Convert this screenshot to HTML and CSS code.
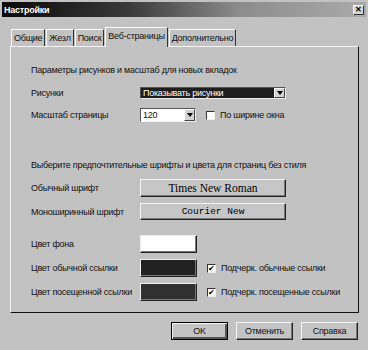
FILE: index.html
```html
<!DOCTYPE html>
<html lang="ru">
<head>
    <meta charset="UTF-8">
    <title>Настройки</title>
    <link rel="stylesheet" href="styles.css">
</head>
<body>
    <div class="window">
        <div class="titlebar">
            <span class="title">Настройки</span>
            <button class="close-btn">&#x2715;</button>
        </div>

        <div class="tabs">
            <div class="tab">Общие</div>
            <div class="tab">Жезл</div>
            <div class="tab">Поиск</div>
            <div class="tab active">Веб-страницы</div>
            <div class="tab">Дополнительно</div>
        </div>

        <div class="panel">
            <div class="section-title first">Параметры рисунков и масштаб для новых вкладок</div>

            <div class="row row-images">
                <span class="label">Рисунки</span>
                <div class="select select-dark">
                    <span class="select-text">Показывать рисунки</span>
                    <span class="arrow-btn"><span class="arrow"></span></span>
                </div>
            </div>

            <div class="row row-zoom">
                <span class="label">Масштаб страницы</span>
                <div class="select select-small">
                    <span class="select-text">120</span>
                    <span class="arrow-btn"><span class="arrow"></span></span>
                </div>
                <label class="check"><span class="box"></span>По ширине окна</label>
            </div>

            <div class="section-title second">Выберите предпочтительные шрифты и цвета для страниц без стиля</div>

            <div class="row row-font1">
                <span class="label">Обычный шрифт</span>
                <button class="font-btn serif">Times New Roman</button>
            </div>
            <div class="row row-font2">
                <span class="label">Моноширинный шрифт</span>
                <button class="font-btn mono">Courier New</button>
            </div>

            <div class="row row-color1">
                <span class="label">Цвет фона</span>
                <button class="color-btn white"></button>
            </div>
            <div class="row row-color">
                <span class="label">Цвет обычной ссылки</span>
                <button class="color-btn dark"></button>
                <label class="check"><span class="box checked">&#x2714;</span>Подчерк. обычные ссылки</label>
            </div>
            <div class="row row-color">
                <span class="label">Цвет посещенной ссылки</span>
                <button class="color-btn dark2"></button>
                <label class="check"><span class="box checked">&#x2714;</span>Подчерк. посещенные ссылки</label>
            </div>
        </div>

        <div class="buttons">
            <button class="dlg-btn default">OK</button>
            <button class="dlg-btn">Отменить</button>
            <button class="dlg-btn">Справка</button>
        </div>
    </div>
</body>
</html>
```

FILE: styles.css
```css
body {
    margin: 0;
    background: #c2c2c2;
    font-family: "Liberation Sans", Arial, sans-serif;
    font-size: 9px;
    letter-spacing: -0.25px;
    color: #111;
}

.window {
    width: 368px;
    height: 350px;
    box-sizing: border-box;
    padding-top: 2px;
    background: #c2c2c2;
    overflow: hidden;
}

/* Заголовок окна */
.titlebar {
    height: 15px;
    margin: 0 2px;
    display: flex;
    align-items: center;
    justify-content: space-between;
    background: linear-gradient(to right, #080808 0%, #3a3a3a 35%, #8c8c8c 65%, #aaaaaa 100%);
}
.title {
    color: #fff;
    font-weight: bold;
    font-size: 9px;
    padding-left: 2px;
}
.close-btn {
    width: 11px;
    height: 10px;
    margin-right: 2px;
    padding: 0;
    font-size: 8px;
    font-weight: bold;
    line-height: 8px;
    background: #d4d4d4;
    color: #000;
    border: 1px solid;
    border-color: #fff #333 #333 #fff;
}

/* Вкладки */
.tabs {
    display: flex;
    align-items: flex-end;
    gap: 1px;
    height: 29px;
    padding-left: 11px;
}
.tab {
    height: 16px;
    line-height: 16px;
    padding: 0 2px;
    border: 1px solid;
    border-color: #fafafa #333 transparent #fafafa;
    border-bottom: none;
    white-space: nowrap;
}
.tab.active {
    height: 19px;
    line-height: 17px;
    padding: 0 2px;
    background: #c2c2c2;
    position: relative;
    top: 1px;
    z-index: 1;
}

/* Панель */
.panel {
    margin-left: 10px;
    width: 349px;
    height: 267px;
    box-sizing: border-box;
    border: 1px solid;
    border-color: #f4f4f4 #111 #111 #f4f4f4;
    padding: 0 20px;
}
.section-title {
    line-height: 12px;
    white-space: nowrap;
}
.section-title.first { margin-top: 17px; }
.section-title.second { margin-top: 37px; }

.row {
    display: flex;
    align-items: center;
}
.label {
    width: 109px;
    flex-shrink: 0;
    white-space: nowrap;
}
.row-images { margin-top: 11px; height: 12px; }
.row-zoom { margin-top: 9px; height: 14px; }
.row-font1 { margin-top: 8px; height: 18px; }
.row-font2 { margin-top: 6px; height: 17px; }
.row-color1 { margin-top: 15px; height: 18px; }
.row-color { margin-top: 6px; height: 18px; }

.select {
    display: flex;
    flex-shrink: 0;
    height: 100%;
    box-sizing: border-box;
    border: 1px solid;
    border-color: #555 #eee #eee #555;
    background: #fff;
}
.select-dark {
    width: 146px;
    background: #1e1e1e;
    color: #fff;
}
.select-small {
    width: 56px;
}
.select-text {
    flex: 1;
    padding-left: 2px;
    line-height: 10px;
}
.select-small .select-text { line-height: 12px; }
.arrow-btn {
    width: 9px;
    background: #d4d4d4;
    border: 1px solid;
    border-color: #fff #444 #444 #fff;
    display: flex;
    align-items: center;
    justify-content: center;
}
.arrow {
    width: 0;
    height: 0;
    border-left: 3px solid transparent;
    border-right: 3px solid transparent;
    border-top: 4px solid #000;
}

.check {
    display: flex;
    align-items: center;
    margin-left: 10px;
    white-space: nowrap;
}
.box {
    width: 7px;
    height: 7px;
    margin-right: 5px;
    background: #fff;
    border: 1px solid;
    border-color: #333 #eee #eee #333;
    font-size: 8px;
    line-height: 7px;
    text-align: center;
    color: #000;
    overflow: hidden;
}

.font-btn {
    width: 146px;
    height: 100%;
    padding: 0;
    flex-shrink: 0;
    background: #c6c6c6;
    color: #000;
    border: 1px solid;
    border-color: #f4f4f4 #222 #222 #f4f4f4;
    box-shadow: inset -1px -1px 0 #777;
    letter-spacing: 0;
}
.font-btn.serif {
    font-family: "Liberation Serif", serif;
    font-size: 11.5px;
}
.font-btn.mono {
    font-family: "Liberation Mono", monospace;
    font-size: 9.5px;
}

.color-btn {
    width: 57px;
    height: 100%;
    padding: 0;
    flex-shrink: 0;
    border: 1px solid;
    border-color: #eee #222 #222 #eee;
    box-shadow: inset -1px -1px 0 #777;
}
.color-btn.white { background: #fff; }
.color-btn.dark { background: #222; }
.color-btn.dark2 { background: #303030; }

/* Кнопки диалога */
.buttons {
    display: flex;
    justify-content: flex-end;
    gap: 8px;
    margin-top: 9px;
    padding-right: 10px;
}
.dlg-btn {
    width: 57px;
    height: 18px;
    padding: 0;
    font-family: inherit;
    font-size: 9px;
    letter-spacing: -0.25px;
    background: #c4c4c4;
    color: #111;
    border: 1px solid;
    border-color: #f4f4f4 #222 #222 #f4f4f4;
    box-shadow: inset -1px -1px 0 #777;
}
.dlg-btn.default {
    border: 1px solid #000;
    box-shadow: inset 1px 1px 0 #f4f4f4, inset -2px -2px 0 #555;
}
```
